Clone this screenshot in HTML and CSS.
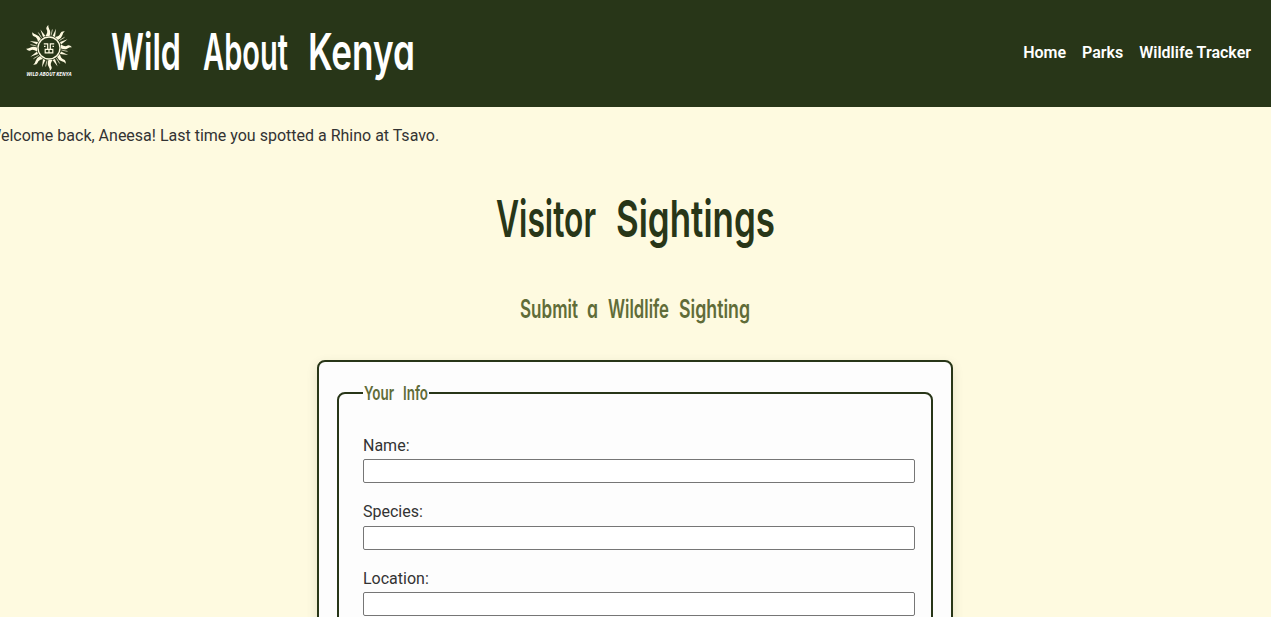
FILE: index.html
```html
<!DOCTYPE html>
<html lang="en">
<head>
<meta charset="utf-8">
<title>Wild About Kenya</title>
<link rel="stylesheet" href="styles.css">
</head>
<body>
<header class="site-header">
  <svg class="logo" viewBox="0 0 50 56" aria-label="Wild About Kenya logo">
    <defs>
      <g id="rays">
        <path class="ray" d="M21.5 12 Q24.3 8 22.6 5.5 Q21.5 3.5 24.3 1 Q24 3.5 25.4 5.5 Q27 8 25.6 12Z"/>
        <path class="ray" d="M28.6 12 L32 4.8 L31 13Z"/>
        <path class="ray-line" d="M27 11.5 L28.4 5.5"/>
      </g>
    </defs>
    <use href="#rays"/>
    <use href="#rays" transform="rotate(45 25 24)"/>
    <use href="#rays" transform="rotate(90 25 24)"/>
    <use href="#rays" transform="rotate(135 25 24)"/>
    <use href="#rays" transform="rotate(180 25 24)"/>
    <use href="#rays" transform="rotate(225 25 24)"/>
    <use href="#rays" transform="rotate(270 25 24)"/>
    <use href="#rays" transform="rotate(315 25 24)"/>
    <circle class="face" cx="25" cy="24" r="11"/>
    <path class="features" d="M19.8 19.8 H23.7 V25 M30.2 19.8 H26.3 V25 M21.2 25.3 H28.8 V28.8 H21.2Z M25 25.5 V28.8 M20 22.3 H21.5 M28.5 22.3 H30"/>
    <text class="logo-text" x="2.5" y="52" textLength="45" lengthAdjust="spacingAndGlyphs">WILD ABOUT KENYA</text>
  </svg>
  <h1 class="brand">
    <svg class="lettering title" width="310" height="72">
      <text x="1" y="52" textLength="70" lengthAdjust="spacingAndGlyphs">Wild</text>
      <text x="93" y="52" textLength="85" lengthAdjust="spacingAndGlyphs">About</text>
      <text x="198" y="52" textLength="107" lengthAdjust="spacingAndGlyphs">Kenya</text>
    </svg>
  </h1>
  <nav class="nav"><a>Home</a><a>Parks</a><a>Wildlife Tracker</a></nav>
</header>
<p class="welcome">Welcome back, Aneesa! Last time you spotted a Rhino at Tsavo.</p>
<main class="main">
  <h2 class="heading">
    <svg class="lettering page-title" width="281" height="72">
      <text x="1" y="49" textLength="100" lengthAdjust="spacingAndGlyphs">Visitor</text>
      <text x="121" y="49" textLength="159" lengthAdjust="spacingAndGlyphs">Sightings</text>
    </svg>
  </h2>
  <h3 class="heading subheading">
    <svg class="lettering subtitle" width="231" height="40">
      <text x="0" y="26" textLength="58" lengthAdjust="spacingAndGlyphs">Submit</text>
      <text x="67" y="26" textLength="11" lengthAdjust="spacingAndGlyphs">a</text>
      <text x="88" y="26" textLength="61" lengthAdjust="spacingAndGlyphs">Wildlife</text>
      <text x="159" y="26" textLength="71" lengthAdjust="spacingAndGlyphs">Sighting</text>
    </svg>
  </h3>
  <form class="card">
    <fieldset class="group">
      <legend class="legend">
        <svg class="lettering legend-text" width="66" height="22">
          <text x="1" y="18" textLength="30" lengthAdjust="spacingAndGlyphs">Your</text>
          <text x="40" y="18" textLength="25" lengthAdjust="spacingAndGlyphs">Info</text>
        </svg>
      </legend>
      <label class="field">Name:<input class="input" type="text"></label>
      <label class="field">Species:<input class="input" type="text"></label>
      <label class="field">Location:<input class="input" type="text"></label>
    </fieldset>
  </form>
</main>
</body>
</html>
```
FILE: styles.css
```css
* { box-sizing: border-box; }
html, body { height: 100%; overflow: hidden; }
body {
  margin: 0;
  background: #fefae0;
  color: #333;
  font: 16px/24px Roboto, sans-serif;
}
.site-header {
  display: flex;
  align-items: center;
  height: 107px;
  padding: 0 20px 0 24px;
  background: #283618;
}
.logo { width: 50px; height: 56px; margin-top: -4px; overflow: visible; }
.ray { fill: #fefae0; }
.ray-line { fill: none; stroke: #fefae0; stroke-width: .7; }
.face { fill: #283618; stroke: #fefae0; stroke-width: 1.3; }
.features { fill: none; stroke: #fefae0; stroke-width: 1.2; }
.logo-text { fill: #fff; font: italic 700 5px "Open Sans", sans-serif; }
.brand { margin: 0 auto 0 36px; }
.lettering { display: block; overflow: visible; font-family: Inter, sans-serif; font-feature-settings: "cv11"; font-weight: 600; }
.title { fill: #fff; font-size: 51px; font-weight: 600; }
.page-title { fill: #283618; font-size: 51px; font-weight: 600; }
.subtitle { fill: #606c38; font-size: 25px; }
.legend-text { fill: #606c38; font-size: 19px; }
.nav { display: flex; gap: 16px; margin-top: -2px; color: #fff; font-weight: 600; }
.welcome { margin: 17px 0 0 -13px; white-space: nowrap; }
.main { display: flex; flex-direction: column; align-items: center; padding-top: 40px; }
.heading { margin: 0; }
.subheading { margin-top: 32px; }
.card {
  width: 636px;
  height: 600px;
  margin: 28px 1px 0 0;
  padding: 20px 18px;
  background: #fdfdfd;
  border: 2px solid #283618;
  border-radius: 8px;
  box-shadow: 0 4px 12px rgba(40, 54, 24, .12);
}
.group { height: 500px; margin: 0; padding: 29.8px 16px 0 24px; border: 2px solid #283618; border-radius: 8px; }
.legend { padding: 0; }
.field { display: block; height: 66.5px; }
.input { display: block; width: 552px; height: 24px; margin: 1.3px 0 0; border: 1px solid #767676; border-radius: 2px; background: #fff; }
```
